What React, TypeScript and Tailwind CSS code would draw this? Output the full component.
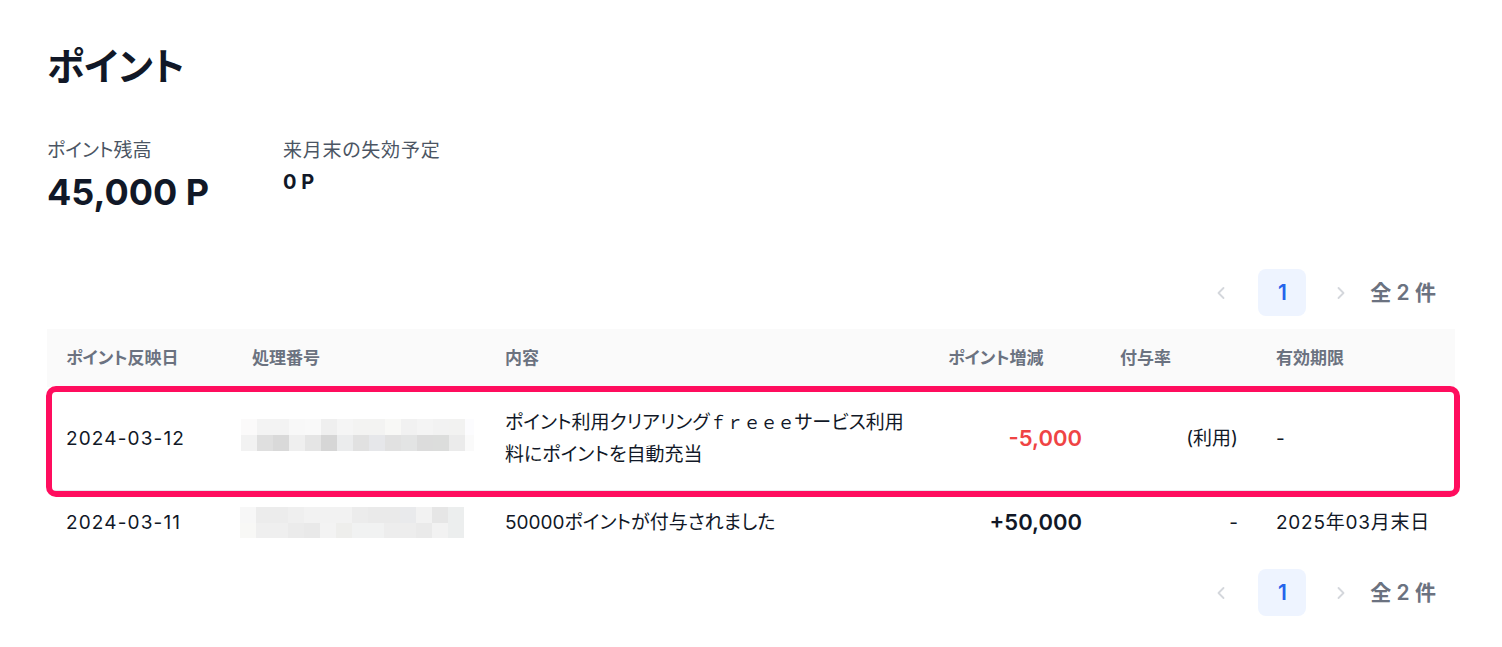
import React from 'react';
import { ChevronLeft, ChevronRight } from 'lucide-react';

// pixelated (masked) transaction numbers
const maskA = [
  'bg-[#fbfafa]', 'bg-[#f3f3f3]', 'bg-[#f3f3f3]', 'bg-[#f8f8f8]', 'bg-[#f9f9f9]', 'bg-[#efefef]', 'bg-[#f5f5f5]', 'bg-[#f3f3f2]',
  'bg-[#f3f3f2]', 'bg-[#f8f8f6]', 'bg-[#f1f1f1]', 'bg-[#f4f4f4]', 'bg-[#f2f2f2]', 'bg-[#f2f2f1]', 'bg-[#fcfcfe]',
  'bg-[#f2f2f2]', 'bg-[#dfdfdf]', 'bg-[#d9d9d9]', 'bg-[#efefef]', 'bg-[#e5e5e5]', 'bg-[#d6d6d6]', 'bg-[#ebeced]', 'bg-[#e1e1e1]',
  'bg-[#e6e7ea]', 'bg-[#e1e1e1]', 'bg-[#e3e4e4]', 'bg-[#dcdcdc]', 'bg-[#dcdddc]', 'bg-[#ebebeb]', 'bg-[#fafafa]',
];

const maskB = [
  'bg-[#f7f7f7]', 'bg-[#ececec]', 'bg-[#ececec]', 'bg-[#efefef]', 'bg-[#f2f2f2]', 'bg-[#f2f2f2]', 'bg-[#f2f2f2]',
  'bg-[#ececec]', 'bg-[#eaeaea]', 'bg-[#eaeaea]', 'bg-[#e9eaec]', 'bg-[#f2f2f2]', 'bg-[#e6e6e6]', 'bg-[#eceeee]',
  'bg-[#f8f8f6]', 'bg-[#efefef]', 'bg-[#efefef]', 'bg-[#ebebeb]', 'bg-[#e9e9e9]', 'bg-[#f3f3f3]', 'bg-[#eeeeec]',
  'bg-[#f1f2f2]', 'bg-[#f1f2f2]', 'bg-[#ededed]', 'bg-[#ededed]', 'bg-[#eaeaea]', 'bg-[#f2f2f2]', 'bg-[#eceeee]',
];

const Pagination: React.FC = () => (
  <div className="flex items-center justify-end pr-[19px]">
    <button className="flex h-[47px] w-[48px] items-center justify-center text-[#d4d7dc]">
      <ChevronLeft size={20} strokeWidth={2.2} />
    </button>
    <div className="ml-[13px] flex h-[47px] w-[48px] items-center justify-center rounded-lg bg-[#eef4ff] text-[21px] font-semibold text-[#2563eb]">
      1
    </div>
    <button className="ml-[11px] flex h-[47px] w-[48px] items-center justify-center text-[#d4d7dc]">
      <ChevronRight size={20} strokeWidth={2.2} />
    </button>
    <span className="ml-[5px] text-[21px] font-semibold text-[#6b7280]">全 2 件</span>
  </div>
);

const cols = 'grid grid-cols-[186px_253px_443px_172px_156px_198px]';

const App: React.FC = () => {
  return (
    <div className="min-h-[647px] w-full bg-white px-[47px] pt-[43px] font-['Inter','Noto_Sans_CJK_JP',sans-serif] text-[#111827] [font-feature-settings:'palt']">
      <h1 className="text-[38px] font-bold leading-[46px]">ポイント</h1>

      <div className="mt-[48px] flex">
        <div className="w-[236px]">
          <div className="text-[19px] leading-[28px] text-[#4b5563]">ポイント残高</div>
          <div className="mt-[5px] text-[36px] font-bold leading-[44px]">45,000 P</div>
        </div>
        <div>
          <div className="text-[19px] leading-[28px] tracking-[0.04em] text-[#4b5563]">来月末の失効予定</div>
          <div className="mt-[3px] text-[20px] font-bold leading-[28px]">0 P</div>
        </div>
      </div>

      <div className="mt-[55px]">
        <Pagination />
      </div>

      <div className="mt-[13px] text-[19px] leading-[31px]">
        <div className={`${cols} h-[58px] items-center bg-[#fafafa] text-[17px] font-bold text-[#6b7280]`}>
          <div className="px-[19px]">ポイント反映日</div>
          <div className="px-[19px]">処理番号</div>
          <div className="px-[19px]">内容</div>
          <div className="px-[19px]">ポイント増減</div>
          <div className="px-[19px]">付与率</div>
          <div className="px-[19px]">有効期限</div>
        </div>

        <div className="relative">
          <div className={`${cols} h-[104px] items-center border-b border-[#e5e7eb]`}>
            <div className="px-[19px] tracking-[0.06em]">2024-03-12</div>
            <div className="-mt-[7px] pl-[8px]">
              <div className="grid grid-cols-[repeat(14,16px)_9px] grid-rows-[16px_16px]">
                {maskA.map((c, i) => (
                  <div key={i} className={c} />
                ))}
              </div>
            </div>
            <div className="whitespace-nowrap px-[19px]">
              ポイント利用クリアリング
              <span className="text-[17px] [font-feature-settings:normal]">ｆｒｅｅｅ</span>
              サービス利用
              <br />
              料にポイントを自動充当
            </div>
            <div className="px-[19px] text-right text-[22px] font-semibold text-[#ef4444]">-5,000</div>
            <div className="px-[19px] text-right">(利用)</div>
            <div className="px-[19px]">-</div>
          </div>
          <div className="pointer-events-none absolute -top-[1px] -bottom-[6px] -left-[1px] -right-[5px] rounded-[10px] border-[6px] border-[#ff0d5e]" />
        </div>

        <div className={`${cols} h-[62px] items-center`}>
          <div className="px-[19px] tracking-[0.06em]">2024-03-11</div>
          <div className="mt-[1px] pl-[7px]">
            <div className="grid grid-cols-[repeat(14,16px)] grid-rows-[16px_15px]">
              {maskB.map((c, i) => (
                <div key={i} className={c} />
              ))}
            </div>
          </div>
          <div className="px-[19px]">50000ポイントが付与されました</div>
          <div className="px-[19px] text-right text-[22px] font-semibold">+50,000</div>
          <div className="px-[19px] text-right">-</div>
          <div className="whitespace-nowrap px-[19px] tracking-[0.04em]">2025年03月末日</div>
        </div>
      </div>

      <div className="mt-[16px]">
        <Pagination />
      </div>
    </div>
  );
};

export default App;
